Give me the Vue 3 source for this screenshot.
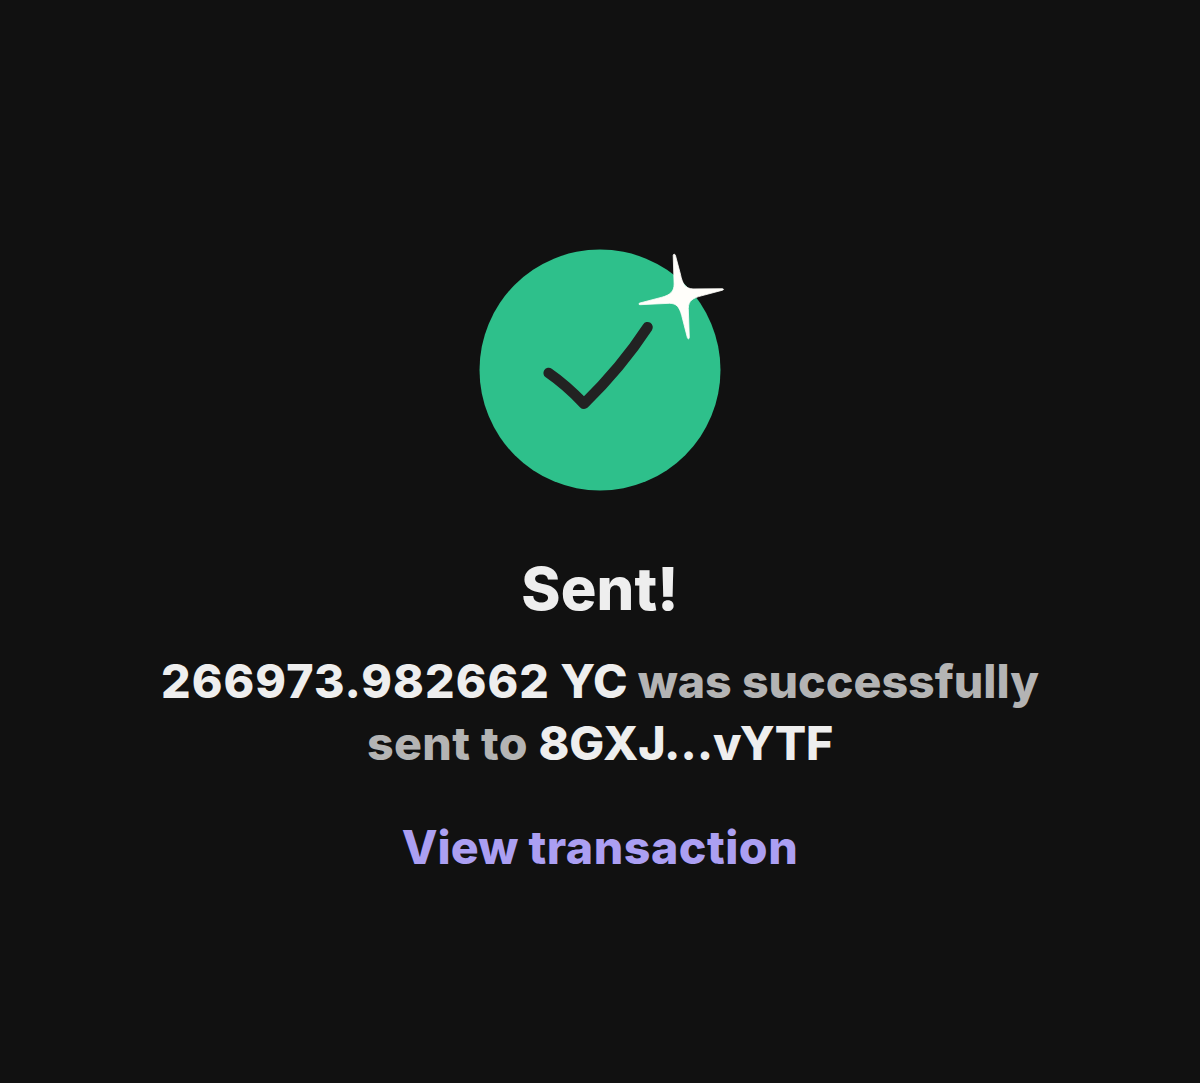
<script setup>
const amount = '266973.982662'
const symbol = 'YC'
const recipient = '8GXJ…vYTF'
</script>

<template>
  <main class="screen">
    <svg class="badge" viewBox="0 0 260 260" aria-hidden="true">
      <circle cx="130" cy="130" r="120.5" fill="#2ec08b" />
      <path
        d="M78.7 133 Q95.500 144.500 114 163.700 Q151.500 127 177.500 87.300"
        fill="none"
        stroke="#222222"
        stroke-width="10.600"
        stroke-linecap="round"
        stroke-linejoin="round"
      />
      <path
        d="M203.200 15.200 C203.300 14 205 13.900 205.400 15.200 L210.400 34 C212.200 43 215 48.700 223 48.900 L252.400 48.700 C253.800 48.800 253.900 49.700 252.500 50.200 L231.500 55.800 C223 58 218.400 60.500 218.300 68.500 L219.300 97.500 C219.200 99.200 217.900 99.300 217.400 97.700 L211.700 75.500 C209.400 67 206.600 63.400 199.500 63.300 L170 64.700 C168.500 64.700 168.400 63.400 169.900 63 L192 57.200 C200 55 204.200 51.500 204.100 44 Z"
        fill="#fffefa"
        stroke="#fffefa"
        stroke-width="0.8"
        stroke-linejoin="round"
      />
    </svg>
    <h1 class="title">Sent!</h1>
    <p class="message">
      <span class="strong"><span class="amount">{{ amount }}</span> {{ symbol }}</span> was successfully<br />
      <span class="sent">sent to </span><span class="strong recipient">{{ recipient }}</span>
    </p>
    <a class="link">View <span class="wide">transaction</span></a>
  </main>
</template>

<style>
body {
  background: #111111;
}
</style>

<style scoped>
.screen {
  box-sizing: border-box;
  min-height: 1083px;
  padding-top: 240px;
  display: flex;
  flex-direction: column;
  align-items: center;
  background: #111111;
  font-family: Inter, sans-serif;
  font-weight: 800;
  text-align: center;
}
.badge {
  width: 260px;
  height: 260px;
}
.title {
  margin: 52px 0 0;
  font-size: 59.5px;
  line-height: 72px;
  font-weight: 850;
  letter-spacing: 0.1px;
  color: #eeeeee;
}
.message {
  margin: 27px 0 0;
  font-size: 46.5px;
  line-height: 61.5px;
  white-space: nowrap;
  color: #b4b4b4;
}
.strong {
  color: #eeeeee;
}
.amount {
  letter-spacing: 1.05px;
}
.recipient {
  letter-spacing: -0.2px;
}
.sent {
  letter-spacing: 0.4px;
}
.wide {
  letter-spacing: 0.5px;
}
.link {
  margin-top: 42px;
  font-size: 46.5px;
  line-height: 62px;
  color: #ab9ff2;
}
</style>
